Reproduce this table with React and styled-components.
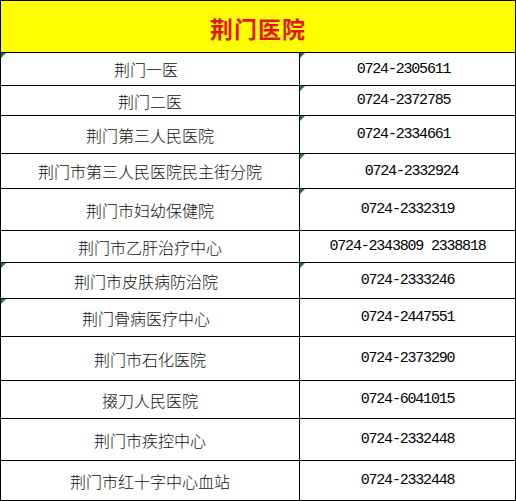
import styled, { createGlobalStyle } from "styled-components"

const rows = [
  { name: "荆门一医", phone: "0724-2305611", h: 33, flagL: true, flagR: true, shiftL: -4, shiftR: -4 },
  { name: "荆门二医", phone: "0724-2372785", h: 30, flagR: true, shiftR: -4 },
  { name: "荆门第三人民医院", phone: "0724-2334661", h: 38, flagR: true, shiftR: -4 },
  { name: "荆门市第三人民医院民主街分院", phone: "0724-2332924", h: 35, flagR: true, shiftR: 4 },
  { name: "荆门市妇幼保健院", phone: "0724-2332319", h: 42, flagR: true },
  { name: "荆门市乙肝治疗中心", phone: "0724-2343809 2338818", h: 32 },
  { name: "荆门市皮肤病防治院", phone: "0724-2333246", h: 36, flagL: true, flagR: true, shiftL: -4 },
  { name: "荆门骨病医疗中心", phone: "0724-2447551", h: 38, flagL: true, shiftL: -4 },
  { name: "荆门市石化医院", phone: "0724-2373290", h: 44 },
  { name: "掇刀人民医院", phone: "0724-6041015", h: 38 },
  { name: "荆门市疾控中心", phone: "0724-2332448", h: 42 },
  { name: "荆门市红十字中心血站", phone: "0724-2332448", h: 40 },
]

export default function App() {
  return (
    <>
      <GlobalStyle />
      <Table>
        <Header>荆门医院</Header>
        {rows.map((r, i) => (
          <Row key={i} h={r.h}>
            <NameCell shift={r.shiftL || 0}>
              {r.flagL && <Flag />}
              {r.name}
            </NameCell>
            <PhoneCell shift={r.shiftR || 0}>
              {r.flagR && <Flag />}
              {r.phone}
            </PhoneCell>
          </Row>
        ))}
      </Table>
    </>
  )
}

const GlobalStyle = createGlobalStyle`
  * { box-sizing: border-box; }
  body {
    margin: 0;
    background: #ffffff;
    font-family: "Noto Sans CJK SC", "Noto Sans", sans-serif;
  }
`

const Table = styled.div`
  width: 516px;
  border: 1px solid #000;
  background: #fff;
`

const Header = styled.div`
  height: 51px;
  display: flex;
  justify-content: center;
  align-items: center;
  padding-top: 3px;

  background: #ffff00;

  font-size: 23px;
  font-weight: 700;
  color: #e8141b;
  letter-spacing: 1px;
`

const Row = styled.div`
  height: ${(p) => p.h}px;
  display: grid;
  grid-template-columns: 298px 1fr;
  border-top: 1px solid #000;
`

const Cell = styled.div`
  position: relative;
  display: flex;
  justify-content: center;
  align-items: center;
  white-space: nowrap;
  color: #111;
`

const NameCell = styled(Cell)`
  font-size: 16px;
  font-weight: 300;
  padding-right: ${(p) => -p.shift * 2}px;
`

const PhoneCell = styled(Cell)`
  border-left: 1px solid #000;
  font-family: "Liberation Mono", "DejaVu Sans Mono", monospace;
  font-size: 15px;
  letter-spacing: -1.2px;
  color: #000;
  padding-left: ${(p) => (p.shift > 0 ? p.shift * 2 : 0)}px;
  padding-right: ${(p) => (p.shift < 0 ? -p.shift * 2 : 0)}px;
`

const Flag = styled.span`
  position: absolute;
  top: 0;
  left: 0;
  width: 0;
  height: 0;
  border-top: 5px solid #2f7a2f;
  border-right: 5px solid transparent;
`
